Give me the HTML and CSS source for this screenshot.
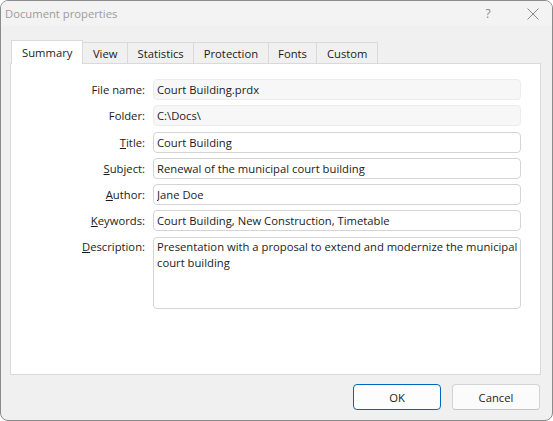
FILE: index.html
```html
<!DOCTYPE html>
<html lang="en">
<head>
  <meta charset="UTF-8">
  <meta name="viewport" content="width=device-width, initial-scale=1.0">
  <title>Document properties</title>
  <link rel="stylesheet" href="styles.css">
</head>
<body>
  <div class="dialog">
    <div class="titlebar">
      <span class="title">Document properties</span>
      <span class="help">?</span>
      <span class="close">
        <svg width="12" height="12" viewBox="0 0 12 12"><path d="M0.5 0.5 L11.5 11.5 M11.5 0.5 L0.5 11.5" stroke="#8a8a8a" stroke-width="1" fill="none"/></svg>
      </span>
    </div>

    <div class="content">
      <div class="tabs">
        <div class="tab active">Summary</div>
        <div class="tab">View</div>
        <div class="tab">Statistics</div>
        <div class="tab">Protection</div>
        <div class="tab">Fonts</div>
        <div class="tab">Custom</div>
      </div>

      <div class="panel">
        <div class="form">
          <label>File name:</label>
          <input type="text" class="readonly" value="Court Building.prdx" readonly>

          <label>Folder:</label>
          <input type="text" class="readonly" value="C:\Docs\" readonly>

          <label><u>T</u>itle:</label>
          <input type="text" value="Court Building">

          <label><u>S</u>ubject:</label>
          <input type="text" value="Renewal of the municipal court building">

          <label><u>A</u>uthor:</label>
          <input type="text" value="Jane Doe">

          <label><u>K</u>eywords:</label>
          <input type="text" value="Court Building, New Construction, Timetable">

          <label class="top"><u>D</u>escription:</label>
          <textarea>Presentation with a proposal to extend and modernize the municipal court building</textarea>
        </div>
      </div>

      <div class="buttons">
        <button class="default">OK</button>
        <button>Cancel</button>
      </div>
    </div>
  </div>
</body>
</html>
```

FILE: styles.css
```css
body {
  margin: 0;
  font-family: 'Segoe UI', 'Open Sans', sans-serif;
  font-size: 11.25px;
  color: #1b1b1b;
  background: #fff;
}
.dialog {
  width: 553px;
  height: 421px;
  box-sizing: border-box;
  border: 1px solid #8b8b8b;
  border-radius: 8px;
  overflow: hidden;
  background: #f0f0f0;
}
.titlebar {
  height: 25px;
  display: flex;
  align-items: center;
  padding-left: 4px;
  background: #f3f3f3;
}
.title {
  font-size: 11.25px;
  color: #9b9b9b;
}
.help {
  margin-left: auto;
  width: 14px;
  text-align: center;
  font-size: 12px;
  color: #8a8a8a;
}
.close {
  display: flex;
  margin-left: 32px;
  margin-right: 13px;
}
.content {
  padding: 14px 11px 0 9px;
}
.tabs {
  display: flex;
  align-items: flex-end;
  height: 23px;
  margin-left: 1px;
}
.tab {
  height: 21px;
  box-sizing: border-box;
  padding: 0 9.5px;
  border: 1px solid #d9d9d9;
  border-bottom: none;
  margin-left: -1px;
  display: flex;
  align-items: center;
  background: #f0f0f0;
}
.tab:first-child {
  margin-left: 0;
}
.tab.active {
  height: 24px;
  padding: 0 10px;
  margin-bottom: -1px;
  background: #fff;
  position: relative;
  z-index: 1;
}
.panel {
  height: 312px;
  box-sizing: border-box;
  border: 1px solid #d9d9d9;
  background: #fff;
}
.form {
  display: grid;
  grid-template-columns: 134px 1fr;
  column-gap: 8px;
  row-gap: 5.3px;
  align-items: center;
  padding: 15px 19px 0 0;
}
.form label {
  text-align: right;
}
.form label.top {
  align-self: start;
  padding-top: 2px;
}
.form input, .form textarea {
  box-sizing: border-box;
  margin: 0;
  border: 1px solid #d4d4d4;
  border-radius: 4px;
  padding: 0 3px;
  font-family: inherit;
  font-size: 11.25px;
  color: #1b1b1b;
  background: #fff;
  outline: none;
}
.form input {
  height: 21px;
}
.form input.readonly {
  background: #f7f7f7;
  border-color: #ececec;
}
.form textarea {
  height: 72px;
  padding: 1px 1px 1px 3px;
  line-height: 16px;
  resize: none;
  overflow: hidden;
}
.buttons {
  display: flex;
  justify-content: flex-end;
  gap: 11px;
  margin-top: 9px;
  padding-right: 1px;
}
.buttons button {
  width: 88px;
  height: 26px;
  box-sizing: border-box;
  border: 1px solid #d3d3d3;
  border-bottom-color: #c4c4c4;
  border-radius: 4px;
  background: #fbfbfb;
  font-family: inherit;
  font-size: 11.25px;
  color: #1b1b1b;
}
.buttons button.default {
  border-color: #0067c0;
  background: #fdfdfd;
}
```
